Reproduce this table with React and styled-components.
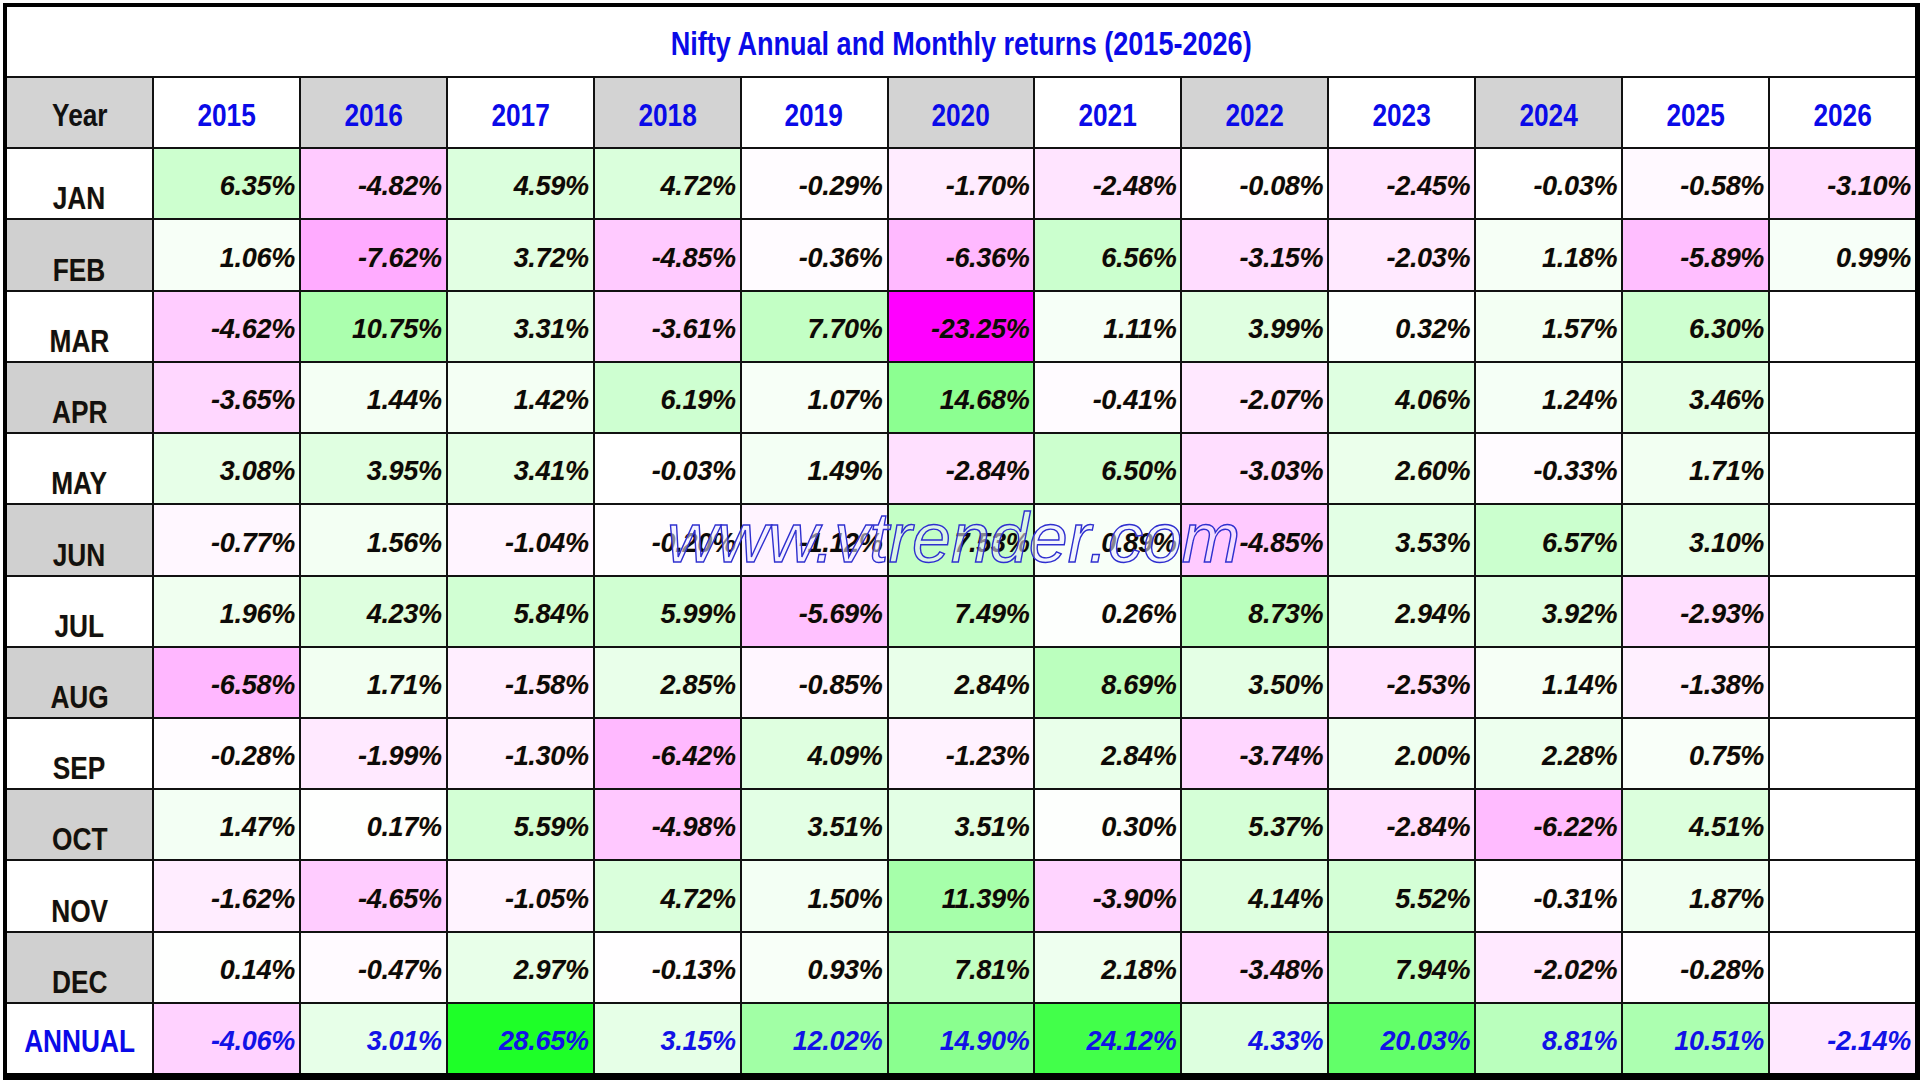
import React from 'react';
import styled, { createGlobalStyle } from 'styled-components';

const GlobalStyle = createGlobalStyle`
    html, body {
        margin: 0;
        padding: 0;
        background: #ffffff;
    }
    body {
        font-family: 'Liberation Sans', Arial, sans-serif;
    }
`;

const years = ['2015', '2016', '2017', '2018', '2019', '2020', '2021', '2022', '2023', '2024', '2025', '2026'];

const rows = [
    ['JAN', [6.35, -4.82, 4.59, 4.72, -0.29, -1.7, -2.48, -0.08, -2.45, -0.03, -0.58, -3.1]],
    ['FEB', [1.06, -7.62, 3.72, -4.85, -0.36, -6.36, 6.56, -3.15, -2.03, 1.18, -5.89, 0.99]],
    ['MAR', [-4.62, 10.75, 3.31, -3.61, 7.7, -23.25, 1.11, 3.99, 0.32, 1.57, 6.3, null]],
    ['APR', [-3.65, 1.44, 1.42, 6.19, 1.07, 14.68, -0.41, -2.07, 4.06, 1.24, 3.46, null]],
    ['MAY', [3.08, 3.95, 3.41, -0.03, 1.49, -2.84, 6.5, -3.03, 2.6, -0.33, 1.71, null]],
    ['JUN', [-0.77, 1.56, -1.04, -0.2, -1.12, 7.53, 0.89, -4.85, 3.53, 6.57, 3.1, null]],
    ['JUL', [1.96, 4.23, 5.84, 5.99, -5.69, 7.49, 0.26, 8.73, 2.94, 3.92, -2.93, null]],
    ['AUG', [-6.58, 1.71, -1.58, 2.85, -0.85, 2.84, 8.69, 3.5, -2.53, 1.14, -1.38, null]],
    ['SEP', [-0.28, -1.99, -1.3, -6.42, 4.09, -1.23, 2.84, -3.74, 2.0, 2.28, 0.75, null]],
    ['OCT', [1.47, 0.17, 5.59, -4.98, 3.51, 3.51, 0.3, 5.37, -2.84, -6.22, 4.51, null]],
    ['NOV', [-1.62, -4.65, -1.05, 4.72, 1.5, 11.39, -3.9, 4.14, 5.52, -0.31, 1.87, null]],
    ['DEC', [0.14, -0.47, 2.97, -0.13, 0.93, 7.81, 2.18, -3.48, 7.94, -2.02, -0.28, null]],
];

const annual = [-4.06, 3.01, 28.65, 3.15, 12.02, 14.9, 24.12, 4.33, 20.03, 8.81, 10.51, -2.14];

// excel style 3 colour scale: magenta <- white -> green
const MAX_UP = 28.65;
const MAX_DOWN = 23.25;
const cellColor = (v) => {
    if (v === null) return '#ffffff';
    if (v >= 0) {
        const f = Math.min(v / MAX_UP, 1);
        const r = Math.round(255 - f * (255 - 30));
        const b = Math.round(255 - f * (255 - 40));
        return `rgb(${r}, 255, ${b})`;
    }
    const f = Math.min(-v / MAX_DOWN, 1);
    const g = Math.round(255 - f * 255);
    return `rgb(255, ${g}, 255)`;
};

const fmt = (v) => (v === null ? '' : `${v.toFixed(2)}%`);

const Page = styled.div`
    padding: 3px 0 0 3px;
    width: 1920px;
    height: 1080px;
    box-sizing: border-box;
    overflow: hidden;
`;

const Sheet = styled.div`
    position: relative;
    box-sizing: border-box;
    width: 1917px;
    height: 1077px;
    border-style: solid;
    border-color: #000;
    border-width: 4px 5px 7px 4px;
    background: #111;
    display: grid;
    grid-template-columns: repeat(13, 1fr);
    grid-template-rows: 69px repeat(14, 1fr);
    gap: 2px;
`;

// no narrow face installed, so squeeze the regular one
const Narrow = styled.span`
    display: inline-block;
    transform: scaleX(0.82);
    transform-origin: center;
    white-space: nowrap;
`;

const Title = styled.div`
    grid-column: 1 / -1;
    background: #fff;
    display: flex;
    align-items: center;
    justify-content: center;
    padding-top: 4px;
    font-weight: bold;
    font-size: 33px;
    color: #0a0ae8;
`;

const HeadCell = styled.div`
    background: ${(p) => (p.$shade ? '#d3d3d3' : '#ffffff')};
    display: flex;
    align-items: center;
    justify-content: center;
    padding-top: 5px;
    font-weight: bold;
    font-size: 32px;
    line-height: 1;
    color: ${(p) => (p.$blue ? '#0a0ae8' : '#111')};
`;

const MonthCell = styled.div`
    background: ${(p) => (p.$shade ? '#d0d0d0' : '#ffffff')};
    display: flex;
    align-items: flex-end;
    justify-content: center;
    padding-bottom: 4px;
    font-weight: bold;
    font-size: 32px;
    line-height: 1;
    color: #111;
    text-shadow: 0 0 1px rgba(255, 170, 60, 0.6);
`;

const AnnualLabel = styled(MonthCell)`
    align-items: center;
    padding-bottom: 0;
    padding-top: 6px;
    font-size: 32px;
    color: #0a0ae8;
    text-shadow: none;
`;

const ValueCell = styled.div`
    display: flex;
    align-items: flex-end;
    justify-content: flex-end;
    padding: 0 4px 18px 0;
    font-weight: bold;
    font-style: italic;
    font-size: 27px;
    line-height: 1;
    letter-spacing: -0.3px;
    color: ${(p) => (p.$blue ? '#1212e6' : '#0a0a0a')};
    text-shadow: ${(p) => (p.$blue ? 'none' : '0 0 1px rgba(255, 170, 60, 0.55)')};
`;

const Watermark = styled.div`
    position: absolute;
    left: 660px;
    top: 496px;
    font-style: italic;
    font-size: 70px;
    line-height: 1;
    white-space: nowrap;
    color: rgba(236, 236, 255, 0.55);
    -webkit-text-stroke: 1.4px #2f2fcf;
    pointer-events: none;
`;

const App = () => {
    return (
        <Page>
            <GlobalStyle />
            <Sheet>
                <Title>
                    <Narrow>Nifty Annual and Monthly returns (2015-2026)</Narrow>
                </Title>

                <HeadCell $shade>
                    <Narrow>Year</Narrow>
                </HeadCell>
                {years.map((y, i) => (
                    <HeadCell key={y} $blue $shade={i % 2 === 1 && i < 11}>
                        <Narrow>{y}</Narrow>
                    </HeadCell>
                ))}

                {rows.map(([month, vals], r) => (
                    <React.Fragment key={month}>
                        <MonthCell $shade={r % 2 === 1}>
                            <Narrow>{month}</Narrow>
                        </MonthCell>
                        {vals.map((v, i) => (
                            <ValueCell key={i} style={{ background: cellColor(v) }}>
                                {fmt(v)}
                            </ValueCell>
                        ))}
                    </React.Fragment>
                ))}

                <AnnualLabel>
                    <Narrow>ANNUAL</Narrow>
                </AnnualLabel>
                {annual.map((v, i) => (
                    <ValueCell key={i} $blue style={{ background: cellColor(v) }}>
                        {fmt(v)}
                    </ValueCell>
                ))}

                <Watermark>www.vtrender.com</Watermark>
            </Sheet>
        </Page>
    );
};

export default App;
